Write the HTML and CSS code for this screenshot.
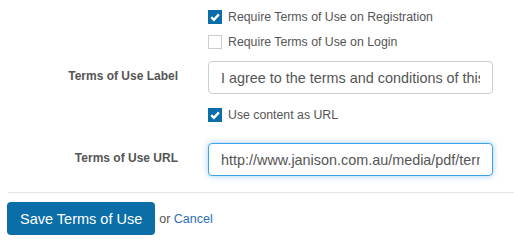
FILE: index.html
```html
<!DOCTYPE html>
<html lang="en">
<head>
    <meta charset="UTF-8">
    <title>Terms of Use</title>
    <link rel="stylesheet" href="styles.css">
</head>
<body>
    <form class="terms-form">
        <!-- Registration / login options -->
        <div class="form-row row-reg">
            <div class="form-label"></div>
            <label class="check">
                <span class="box checked">
                    <svg viewBox="0 0 14 14" width="14" height="14"><path d="M3.2 7.2 L5.9 9.8 L10.9 4.4" fill="none" stroke="#fff" stroke-width="2.4"/></svg>
                </span>
                Require Terms of Use on Registration
            </label>
        </div>
        <div class="form-row row-login">
            <div class="form-label"></div>
            <label class="check">
                <span class="box"></span>
                Require Terms of Use on Login
            </label>
        </div>

        <!-- Label text -->
        <div class="form-row row-text">
            <div class="form-label">Terms of Use Label</div>
            <input class="text-input" type="text" value="I agree to the terms and conditions of this site">
        </div>
        <div class="form-row row-url-check">
            <div class="form-label"></div>
            <label class="check">
                <span class="box checked">
                    <svg viewBox="0 0 14 14" width="14" height="14"><path d="M3.2 7.2 L5.9 9.8 L10.9 4.4" fill="none" stroke="#fff" stroke-width="2.4"/></svg>
                </span>
                Use content as URL
            </label>
        </div>

        <!-- URL -->
        <div class="form-row row-url">
            <div class="form-label">Terms of Use URL</div>
            <input class="text-input focused" type="text" value="http://www.janison.com.au/media/pdf/terms-of-use.pdf">
        </div>

        <div class="form-actions">
            <button type="button" class="btn-save">Save Terms of Use</button>
            <span class="or">or <a href="#">Cancel</a></span>
        </div>
    </form>
</body>
</html>
```

FILE: styles.css
```css
body {
    margin: 0;
    font-family: 'Liberation Sans', Arial, sans-serif;
    font-size: 12.3px;
    color: #555;
    background: #fff;
}

.terms-form {
    padding-top: 10px;
}

/* Two column rows */
.form-row {
    display: grid;
    grid-template-columns: 171px 285px;
    column-gap: 30px;
    padding-left: 7px;
}

.form-label {
    text-align: right;
    font-weight: bold;
    font-size: 12px;
    padding-top: 8px;
}

.row-login {
    margin-top: 11px;
}

.row-text {
    margin-top: 12px;
}

.row-url-check {
    margin-top: 14px;
}

.row-url {
    margin-top: 21px;
}

/* Checkboxes */
.check {
    display: flex;
    align-items: center;
    gap: 6px;
    height: 14px;
    line-height: 14px;
}

.box {
    width: 14px;
    height: 14px;
    box-sizing: border-box;
    border: 1px solid #ccc;
    background: #fff;
    display: block;
}

.box svg {
    display: block;
}

.box.checked {
    border: none;
    background: #0b6ea8;
}

/* Text inputs */
.text-input {
    width: 285px;
    height: 33px;
    box-sizing: border-box;
    padding: 0 12px;
    border: 1px solid #ccc;
    border-radius: 4px;
    font-family: 'Liberation Sans', Arial, sans-serif;
    font-size: 14.4px;
    color: #555;
    outline: none;
}

.text-input.focused {
    border-color: #3ba5ec;
    box-shadow: 0 0 6px rgba(102, 175, 233, 0.6);
}

/* Actions */
.form-actions {
    margin: 16px 0 0 8px;
    border-top: 1px solid #e5e5e5;
    padding-top: 9px;
    display: flex;
    align-items: center;
    gap: 4px;
}

.btn-save {
    margin-left: -1px;
    height: 33px;
    padding: 0 13px;
    background: #0b6ea8;
    color: #fff;
    border: none;
    border-radius: 4px;
    font-family: 'Liberation Sans', Arial, sans-serif;
    font-size: 14.5px;
    cursor: pointer;
}

.or {
    font-size: 12.5px;
    color: #555;
}

.or a {
    color: #2a6fb8;
    text-decoration: none;
}
```
